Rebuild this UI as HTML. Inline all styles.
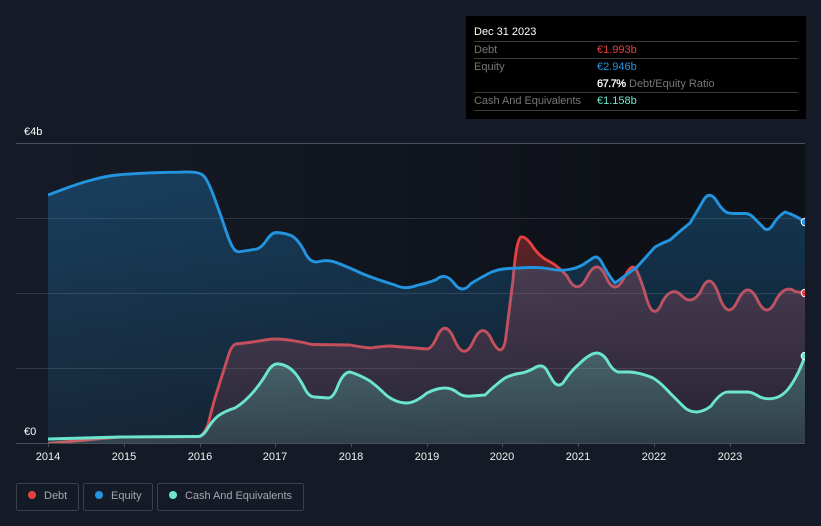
<!DOCTYPE html>
<html><head><meta charset="utf-8"><style>
html,body{margin:0;padding:0;background:#151b26}
body{width:821px;height:526px;overflow:hidden;position:relative}
svg{position:absolute;left:0;top:0}
text{font-family:"Liberation Sans",sans-serif;font-size:11px}
</style></head><body>
<svg width="821" height="526" viewBox="0 0 821 526">
<defs>
<linearGradient id="bg" gradientUnits="userSpaceOnUse" x1="48" y1="0" x2="620" y2="0"><stop offset="0" stop-color="#151b26"/><stop offset="1" stop-color="#0e1118"/></linearGradient>
<linearGradient id="fd" gradientUnits="userSpaceOnUse" x1="0" y1="230" x2="0" y2="443"><stop offset="0" stop-color="#e64141" stop-opacity=".36"/><stop offset="1" stop-color="#e64141" stop-opacity=".1"/></linearGradient>
<linearGradient id="fe" gradientUnits="userSpaceOnUse" x1="0" y1="170" x2="0" y2="443"><stop offset="0" stop-color="#2394df" stop-opacity=".3"/><stop offset="1" stop-color="#2394df" stop-opacity=".1"/></linearGradient>
<linearGradient id="fc" gradientUnits="userSpaceOnUse" x1="0" y1="350" x2="0" y2="443"><stop offset="0" stop-color="#6ce5d0" stop-opacity=".28"/><stop offset="1" stop-color="#6ce5d0" stop-opacity=".14"/></linearGradient>
<clipPath id="c"><rect x="48" y="130" width="757" height="313.5"/></clipPath>
</defs>
<rect x="48" y="143" width="757" height="300" fill="url(#bg)"/>
<g stroke="#fff" stroke-opacity=".13" stroke-width="1">
<path d="M16 218.5H805M16 293.5H805M16 368.5H805"/></g>
<path d="M16 143.5H805" stroke="#4a4e56"/>
<g clip-path="url(#c)">
<!-- debt -->
<path fill="url(#fd)" d="M48 443.5Q64 442 80 440.5Q100 438.5 120 437L200 436.5Q204 434 208 425Q211 412 215 398L227 360Q231 345 236 344L253 342Q263 340 273 339Q284 339 295 341Q304 342.5 312 344.5L350 345Q360 347 370 348Q380 346.5 390 346L427 349Q431 349 436 339Q445 317 454.5 340Q464 362 473.5 341Q483 320 492.5 341.5Q502 359 505.5 340L513 280Q516.5 238 521 237Q526 236 533 247Q540 257 548.5 261Q557 265 567 276Q577 297 587 277Q597 257 606 277Q615 297 624.5 277Q631 264 635 268Q638 271 645 293Q653 325 662.5 301.5Q672 285 682 296Q692 306 701 291Q710 269 719 295.5Q728 322 738 300Q748 280 757.5 300Q767 320 776 300Q785 284 795 291.5L805 293L805 443L48 443Z"/>
<path fill="none" stroke="#e64141" stroke-width="2.9" stroke-linejoin="round" d="M48 443.5Q64 442 80 440.5Q100 438.5 120 437L200 436.5Q204 434 208 425Q211 412 215 398L227 360Q231 345 236 344L253 342Q263 340 273 339Q284 339 295 341Q304 342.5 312 344.5L350 345Q360 347 370 348Q380 346.5 390 346L427 349Q431 349 436 339Q445 317 454.5 340Q464 362 473.5 341Q483 320 492.5 341.5Q502 359 505.5 340L513 280Q516.5 238 521 237Q526 236 533 247Q540 257 548.5 261Q557 265 567 276Q577 297 587 277Q597 257 606 277Q615 297 624.5 277Q631 264 635 268Q638 271 645 293Q653 325 662.5 301.5Q672 285 682 296Q692 306 701 291Q710 269 719 295.5Q728 322 738 300Q748 280 757.5 300Q767 320 776 300Q785 284 795 291.5L805 293"/>
<!-- equity -->
<path fill="url(#fe)" d="M48 195L64 189Q80 183 93.5 179.5Q107 176 117 175Q127 174 143.5 173.2Q160 172.5 179 172.2Q198 171 202.5 175Q207 178 213.5 195.5Q220 213 225 228Q230 243 233 247.5Q236 253 241 251.5L257 249Q262 247 266 241Q271 233 276 232.5Q285 233 291 235.5Q297 238 304 250.5Q309 262 316 262L322 261Q330 259.5 340 264Q350 268 357.5 271.5Q365 275 375 278.5Q385 282 395 285Q405 290 416.5 285.5Q428 283 436.5 279.5Q445 272 453.5 282.5Q462 295 471 283.5Q480 278 488.5 273.5Q497 269 508.5 268.5Q520 268 530 267.5Q540 267 550 269Q560 271 569 269.5Q578 268 584 264Q590 260 593 258Q597 255 601 261Q608 275 615 283Q626 275 637 267Q646 257 655 247Q662 243 670 240Q680 231 690 223Q699 208 703 201Q709 190 716 200Q722 210 727 212.5Q730 213.5 735 213.5L745 213.5Q750 213.5 754 218L762 226Q767 233 772 226Q778 216 785 212Q795 215 805 222L805 443L48 443Z"/>
<path fill="none" stroke="#2394df" stroke-width="2.9" d="M48 195L64 189Q80 183 93.5 179.5Q107 176 117 175Q127 174 143.5 173.2Q160 172.5 179 172.2Q198 171 202.5 175Q207 178 213.5 195.5Q220 213 225 228Q230 243 233 247.5Q236 253 241 251.5L257 249Q262 247 266 241Q271 233 276 232.5Q285 233 291 235.5Q297 238 304 250.5Q309 262 316 262L322 261Q330 259.5 340 264Q350 268 357.5 271.5Q365 275 375 278.5Q385 282 395 285Q405 290 416.5 285.5Q428 283 436.5 279.5Q445 272 453.5 282.5Q462 295 471 283.5Q480 278 488.5 273.5Q497 269 508.5 268.5Q520 268 530 267.5Q540 267 550 269Q560 271 569 269.5Q578 268 584 264Q590 260 593 258Q597 255 601 261Q608 275 615 283Q626 275 637 267Q646 257 655 247Q662 243 670 240Q680 231 690 223Q699 208 703 201Q709 190 716 200Q722 210 727 212.5Q730 213.5 735 213.5L745 213.5Q750 213.5 754 218L762 226Q767 233 772 226Q778 216 785 212Q795 215 805 222"/>
<!-- cash -->
<path fill="url(#fc)" d="M48 439L120 437L198 436.5Q202 436.5 206 431Q212 421 218 416Q225 411 235 408Q245 402 255 390Q263 380 268 371Q273 363 279 364Q288 365 295 373Q300 379 305 389Q309 397 315 397L328 398Q333 398 337 388Q343 372 350 372Q360 375 370 381Q378 387 386 395Q396 403 407 403Q415 403 427 393Q437 388 445 388Q452 388 458 393Q463 397 472 396L485 395Q495 385 505 378Q513 374 522 373Q530 371 536 367Q542 364 546 369L553 381Q558 388 563 383Q570 372 578 365Q590 353 597 353Q602 353 607 360Q612 370 618 372L630 372Q642 373 653 378Q660 382 670 393L684 407Q689 412 697 412Q705 411 711 406Q720 393 727 392L748 392Q752 392 760 397Q767 400 775 398Q783 396 789 388Q798 376 805 356L805 443L48 443Z"/>
<path fill="none" stroke="#6ce5d0" stroke-width="2.9" d="M48 439L120 437L198 436.5Q202 436.5 206 431Q212 421 218 416Q225 411 235 408Q245 402 255 390Q263 380 268 371Q273 363 279 364Q288 365 295 373Q300 379 305 389Q309 397 315 397L328 398Q333 398 337 388Q343 372 350 372Q360 375 370 381Q378 387 386 395Q396 403 407 403Q415 403 427 393Q437 388 445 388Q452 388 458 393Q463 397 472 396L485 395Q495 385 505 378Q513 374 522 373Q530 371 536 367Q542 364 546 369L553 381Q558 388 563 383Q570 372 578 365Q590 353 597 353Q602 353 607 360Q612 370 618 372L630 372Q642 373 653 378Q660 382 670 393L684 407Q689 412 697 412Q705 411 711 406Q720 393 727 392L748 392Q752 392 760 397Q767 400 775 398Q783 396 789 388Q798 376 805 356"/>
<circle cx="805" cy="222" r="3.8" fill="#2394df" stroke="#fff" stroke-width="1"/>
<circle cx="805" cy="293" r="3.8" fill="#e64141" stroke="#fff" stroke-width="1"/>
<circle cx="805" cy="356" r="3.8" fill="#6ce5d0" stroke="#fff" stroke-width="1"/>
</g>
<path d="M16 443.5H805" stroke="#4a4e56"/>
<path d="M48.5 443V447M124.5 443V447M200.5 443V447M275.5 443V447M351.5 443V447M427.5 443V447M502.5 443V447M578.5 443V447M654.5 443V447M730.5 443V447" stroke="#4a4e56"/>
<text x="24" y="135" fill="#fff">€4b</text>
<text x="24" y="435" fill="#fff">€0</text>
<g fill="#f0f0f0" text-anchor="middle">
<text x="48" y="460">2014</text><text x="124" y="460">2015</text><text x="200" y="460">2016</text><text x="275" y="460">2017</text><text x="351" y="460">2018</text><text x="427" y="460">2019</text><text x="502" y="460">2020</text><text x="578" y="460">2021</text><text x="654" y="460">2022</text><text x="730" y="460">2023</text>
</g>
<!-- tooltip -->
<rect x="466" y="16" width="340" height="103" fill="#000"/>
<path d="M474 41.5H798M474 58.5H798M474 92.5H798M474 110.5H798" stroke="#3a3a3a"/>
<text x="474" y="35" fill="#fff">Dec 31 2023</text>
<text x="474" y="53" fill="#777">Debt</text>
<text x="597" y="53" fill="#e64141">€1.993b</text>
<text x="474" y="70" fill="#777">Equity</text>
<text x="597" y="70" fill="#2394df">€2.946b</text>
<text x="597" y="87" fill="#fff" stroke="#fff" stroke-width=".3" textLength="29">67.7%</text>
<text x="629" y="87" fill="#777">Debt/Equity Ratio</text>
<text x="474" y="104" fill="#777" textLength="107">Cash And Equivalents</text>
<text x="597" y="104" fill="#6ce5d0">€1.158b</text>
<!-- legend -->
<g fill="none" stroke="#3c414a"><rect x="16.5" y="483.5" width="62" height="27" rx="2"/><rect x="83.5" y="483.5" width="69" height="27" rx="2"/><rect x="157.5" y="483.5" width="146" height="27" rx="2"/></g>
<circle cx="32" cy="495" r="4" fill="#e64141"/><circle cx="99" cy="495" r="4" fill="#2394df"/><circle cx="173" cy="495" r="4" fill="#6ce5d0"/>
<g fill="#a3a7ad"><text x="44" y="499">Debt</text><text x="111" y="499">Equity</text><text x="185" y="499" textLength="107">Cash And Equivalents</text></g>
</svg>
</body></html>
